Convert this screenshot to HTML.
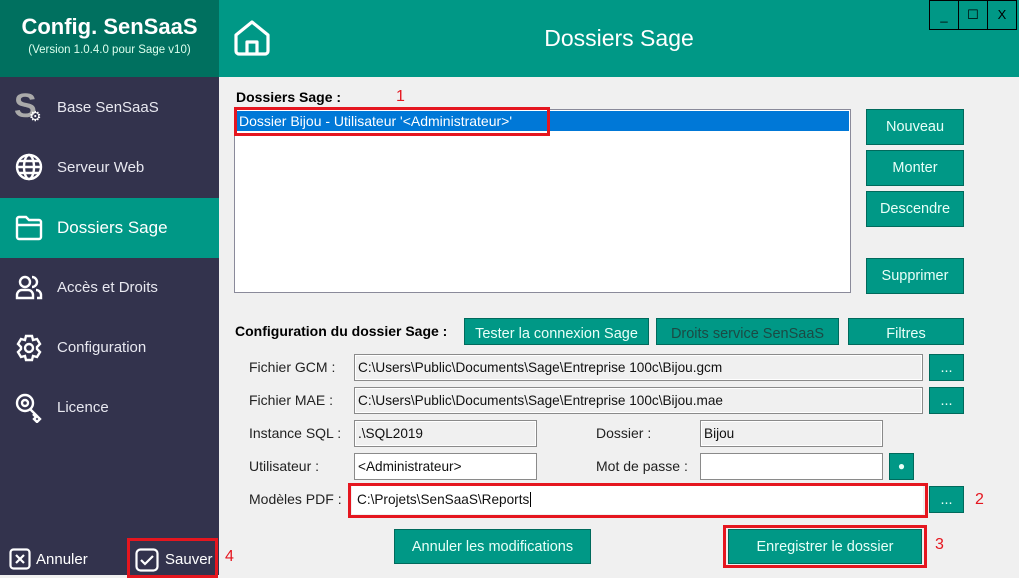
<!DOCTYPE html>
<html><head><meta charset="utf-8"><style>
*{box-sizing:border-box;margin:0;padding:0}
body{width:1019px;height:575px;overflow:hidden;background:#f0f0f0;font-family:"Liberation Sans",sans-serif;position:relative;font-size:14px}
.a{position:absolute}
.side{left:0;top:0;width:219px;height:575px;background:#33334d}
.logo{left:0;top:0;width:219px;height:77px;background:#00705f;color:#fff;text-align:center}
.nav{left:0;width:219px;height:60px;color:#e8e8f0;font-size:15px;line-height:60px;padding-left:57px}
.hdr{left:219px;top:0;width:800px;height:77px;background:#009886}
.btn{position:absolute;background:#009886;border:1px solid #006a5c;color:#e8fff8;font-size:14.5px;text-align:center}
.in{position:absolute;background:#f0f0f0;border:1px solid #8a8a8a;font-size:13.6px;padding-left:3px;line-height:25px;color:#111;box-shadow:inset 0 0 0 1px #fff;white-space:nowrap;overflow:hidden}
.wh{background:#fff}
.lbl{position:absolute;font-size:14px;color:#222}
.red{position:absolute;border:3px solid #e5161f}
.num{position:absolute;color:#e5161f;font-size:16px}
</style></head><body>
<div class="a side"></div>
<div class="a logo"><div style="font-size:22px;font-weight:bold;padding-top:14px">Config. SenSaaS</div><div style="font-size:11.5px;margin-top:4px;color:#dfe">(Version 1.0.4.0 pour Sage v10)</div></div>
<div class="a nav" style="top:78px"><span style="position:absolute;left:14px;top:-2px;font-size:34px;font-weight:bold;color:#aaa">S</span><span style="position:absolute;left:29px;top:8px;font-size:14px;color:#fff">⚙</span>Base SenSaaS</div>
<div class="a nav" style="top:138px"><svg class="a" style="left:15px;top:15px" width="28" height="28" viewBox="0 0 28 28" fill="none" stroke="#fff" stroke-width="2.4"><circle cx="14" cy="14" r="12"/><ellipse cx="14" cy="14" rx="5" ry="12"/><path d="M2 14h24M4 8h20M4 20h20"/></svg>Serveur Web</div>
<div class="a nav" style="top:198px;background:#009886;color:#fff;font-size:17px"><svg class="a" style="left:15px;top:17px" width="28" height="26" viewBox="0 0 28 26" fill="none" stroke="#fff" stroke-width="2.4"><path d="M2 4a2 2 0 0 1 2-2h7l3 3h10a2 2 0 0 1 2 2v15a2 2 0 0 1-2 2H4a2 2 0 0 1-2-2z"/><path d="M2 10h24"/></svg>Dossiers Sage</div>
<div class="a nav" style="top:258px"><svg class="a" style="left:15px;top:16px" width="28" height="26" viewBox="0 0 28 26" fill="none" stroke="#fff" stroke-width="2.4"><circle cx="10" cy="8" r="5"/><path d="M2 24v-3a5 5 0 0 1 5-5h6a5 5 0 0 1 5 5v3z"/><path d="M17 3a5 5 0 0 1 0 10M21 16a5 5 0 0 1 5 5v3h-4"/></svg>Accès et Droits</div>
<div class="a nav" style="top:318px"><svg class="a" style="left:15px;top:16px" width="28" height="28" viewBox="0 0 28 28" fill="none" stroke="#fff" stroke-width="2.4"><path d="M11 2h6l1 4 4-1 3 5-3 3 0 2 3 3-3 5-4-1-1 4h-6l-1-4-4 1-3-5 3-3v-2l-3-3 3-5 4 1z"/><circle cx="14" cy="14" r="4"/></svg>Configuration</div>
<div class="a nav" style="top:378px"><svg class="a" style="left:15px;top:15px" width="28" height="30" viewBox="0 0 28 30" fill="none" stroke="#fff" stroke-width="2.4"><circle cx="10" cy="10" r="8"/><circle cx="10" cy="10" r="3"/><path d="M15 16l10 10-3 3-3-3 2-2-3-3"/></svg>Licence</div>
<svg class="a" style="left:9px;top:548px" width="22" height="22" viewBox="0 0 22 22" fill="none" stroke="#fff" stroke-width="2.2"><rect x="1.5" y="1.5" width="19" height="19" rx="3"/><path d="M7 7l8 8M15 7l-8 8"/></svg>
<div class="a" style="left:36px;top:551px;color:#fff;font-size:15px">Annuler</div>
<div class="red" style="left:127px;top:538px;width:91px;height:40px"></div>
<svg class="a" style="left:135px;top:548px" width="24" height="24" viewBox="0 0 24 24" fill="none" stroke="#fff" stroke-width="2.2"><rect x="1.5" y="1.5" width="21" height="21" rx="4"/><path d="M6 12l4 4 8-8"/></svg>
<div class="a" style="left:165px;top:551px;color:#fff;font-size:15px">Sauver</div>
<div class="num" style="left:225px;top:548px">4</div>

<div class="a hdr"></div>
<svg class="a" style="left:233px;top:19px" width="38" height="38" viewBox="0 0 38 38" fill="none" stroke="#fff" stroke-width="3.2" stroke-linejoin="round"><path d="M3 16L19 3l16 13v16a3 3 0 0 1-3 3H6a3 3 0 0 1-3-3z"/><path d="M14 35V23h10v12"/></svg>
<div class="a" style="left:219px;width:800px;top:25px;text-align:center;color:#fff;font-size:23px">Dossiers Sage</div>
<div class="a" style="left:929px;top:0;width:88px;height:30px;border:1px solid #000;display:flex;color:#000;font-size:13px">
<div style="flex:1;border-right:1px solid #000;text-align:center;line-height:30px">_</div><div style="flex:1;border-right:1px solid #000;text-align:center;line-height:28px">☐</div><div style="flex:1;text-align:center;line-height:28px">X</div></div>

<div class="lbl" style="left:236px;top:89px;font-weight:bold;color:#000">Dossiers Sage :</div>
<div class="num" style="left:396px;top:88px">1</div>
<div class="a" style="left:234px;top:109px;width:617px;height:184px;background:#fff;border:1px solid #8a8a9a"></div>
<div class="a" style="left:236px;top:111px;width:613px;height:20px;background:#0078d7;color:#fff;font-size:14px;line-height:20px;padding-left:3px">Dossier Bijou - Utilisateur '&lt;Administrateur&gt;'</div>
<div class="red" style="left:234px;top:107px;width:316px;height:29px"></div>
<div class="btn" style="left:866px;top:109px;width:98px;height:36px;line-height:34px">Nouveau</div>
<div class="btn" style="left:866px;top:150px;width:98px;height:36px;line-height:34px">Monter</div>
<div class="btn" style="left:866px;top:191px;width:98px;height:36px;line-height:34px">Descendre</div>
<div class="btn" style="left:866px;top:258px;width:98px;height:36px;line-height:34px">Supprimer</div>

<div class="lbl" style="left:235px;top:323px;font-weight:bold;color:#000">Configuration du dossier Sage :</div>
<div class="btn" style="left:464px;top:318px;width:185px;height:27px;line-height:30px;overflow:hidden">Tester la connexion Sage</div>
<div class="btn" style="left:656px;top:318px;width:183px;height:27px;line-height:30px;overflow:hidden;color:#1b4a44">Droits service SenSaaS</div>
<div class="btn" style="left:848px;top:318px;width:116px;height:27px;line-height:30px;overflow:hidden">Filtres</div>

<div class="lbl" style="left:249px;top:359px">Fichier GCM :</div>
<div class="in" style="left:354px;top:354px;width:569px;height:27px">C:\Users\Public\Documents\Sage\Entreprise 100c\Bijou.gcm</div>
<div class="btn" style="left:929px;top:354px;width:35px;height:27px;line-height:26px">...</div>
<div class="lbl" style="left:249px;top:392px">Fichier MAE :</div>
<div class="in" style="left:354px;top:387px;width:569px;height:27px">C:\Users\Public\Documents\Sage\Entreprise 100c\Bijou.mae</div>
<div class="btn" style="left:929px;top:387px;width:35px;height:27px;line-height:26px">...</div>
<div class="lbl" style="left:249px;top:425px">Instance SQL :</div>
<div class="in" style="left:354px;top:420px;width:183px;height:27px">.\SQL2019</div>
<div class="lbl" style="left:596px;top:425px">Dossier :</div>
<div class="in" style="left:700px;top:420px;width:183px;height:27px">Bijou</div>
<div class="lbl" style="left:249px;top:458px">Utilisateur :</div>
<div class="in wh" style="left:354px;top:453px;width:183px;height:27px">&lt;Administrateur&gt;</div>
<div class="lbl" style="left:596px;top:458px">Mot de passe :</div>
<div class="in wh" style="left:700px;top:453px;width:183px;height:27px"></div>
<div class="btn" style="left:889px;top:453px;width:25px;height:27px;line-height:24px;font-size:12px">●</div>
<div class="lbl" style="left:249px;top:491px">Modèles PDF :</div>
<div class="in wh" style="left:352px;top:486px;width:571px;height:28px;border:none;box-shadow:none;line-height:28px;padding-left:5px">C:\Projets\SenSaaS\Reports<span style="border-left:1px solid #000;margin-left:1px"></span></div>
<div class="red" style="left:348px;top:483px;width:580px;height:35px"></div>
<div class="btn" style="left:929px;top:486px;width:35px;height:27px;line-height:26px">...</div>
<div class="num" style="left:975px;top:491px">2</div>

<div class="btn" style="left:394px;top:529px;width:197px;height:35px;line-height:34px">Annuler les modifications</div>
<div class="btn" style="left:728px;top:529px;width:194px;height:35px;line-height:34px">Enregistrer le dossier</div>
<div class="red" style="left:723px;top:525px;width:204px;height:43px"></div>
<div class="num" style="left:935px;top:536px">3</div>
</body></html>
